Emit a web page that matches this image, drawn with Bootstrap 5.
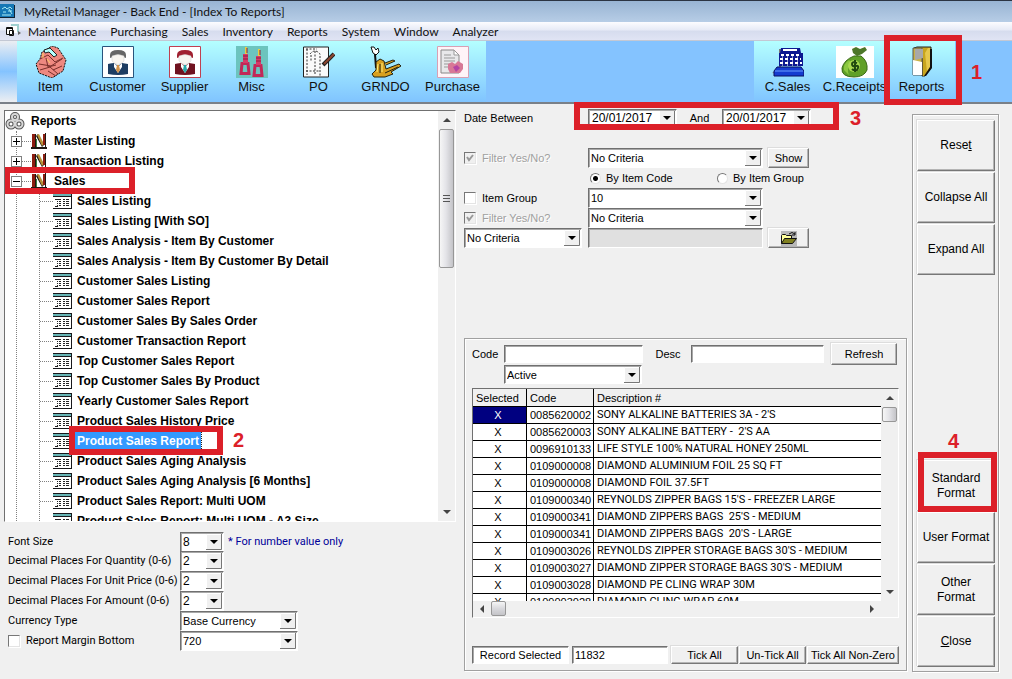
<!DOCTYPE html>
<html lang="en">
<head>
<meta charset="utf-8">
<meta name="viewport" content="width=device-width, initial-scale=1">
<title>MyRetail Manager - Back End - [Index To Reports]</title>
<link href="https://cdn.jsdelivr.net/npm/bootstrap@5.3.0/dist/css/bootstrap.min.css" rel="stylesheet">
<style>
:root{--face:#f0f0f0;--mark:#dc2029}
body{height:100vh;min-height:640px;background:var(--face);color:#000;font:11px/14px "Liberation Sans",Arial,sans-serif;overflow-x:hidden}
.titlebar{height:22px;border-top:1px solid #2b3442;background:linear-gradient(#98b4d3,#b7cde6);white-space:nowrap}
.titlebar h1,.menubar a{font:12px/19px Lato,"Open Sans",sans-serif;color:#111}
.menubar{height:19px;background:linear-gradient(#fcfcff,#e6eaf6 45%,#d6dcee 50%,#e0e4f4);border-bottom:1px solid #c3c8d4}
.menubar a{text-decoration:none}
.menus{gap:14px;margin-left:6px}
.toolstrip{height:63px;background:#84c3ff;border-bottom:2px solid #7a8088}
.grip{width:17px;background:linear-gradient(#eceef2,#84c3ff 50%,#eceef2)}
.tools{background:linear-gradient(#b4ffff,#80c4ff)}
.tools.last{margin-right:57px}
.tool{display:flex;flex-direction:column;align-items:center;width:67px;height:61px;padding:5px 0 0;border:0;background:none;font-size:13px;line-height:18px;color:#111;white-space:nowrap}
.tool svg{width:32px;height:32px;flex:none}
.ring{position:absolute;border:6px solid var(--mark);pointer-events:none;z-index:2}
.step{position:absolute;color:var(--mark);font-size:20px;line-height:20px;font-weight:700;z-index:2}
.ring-tool{inset:-6px -7px -3px -4px}
.ring-date{inset:-7px -28px -3px -14px}
.ring-pick{inset:-6px -22px -5px -6px}
.ring-node{inset:-4px -50px -3px -50px}
.ring-btn{inset:-7px -2px -1px 1px}
.work{display:grid;grid-template-columns:minmax(0,452fr) minmax(0,451fr) 92px;padding:4px 13px 8px 4px;min-height:0}
.left{margin-top:2px;min-height:0}
.mid{margin-left:8px;min-height:0}
.right{margin:6px 0 -1px 5px;border:1px solid #a0a0a0;box-shadow:inset 1px 1px #fff,1px 1px #fff;padding:4px 3px 4px 4px}
.well{border:1px solid #707070;border-right-color:#fff;border-bottom-color:#fff;background:#fff}
.tree{font-weight:700;font-size:12px;line-height:20px;min-height:0;flex:1 1 0}
.tree ul{list-style:none;margin:0;padding:0}
.tree-view{overflow:hidden;white-space:nowrap}
.tree li>div,.tree-root{height:20px;display:flex;align-items:center;width:max-content}
.tree-root{gap:6px}
.tree .branch{margin-left:11px;position:relative;z-index:0}
.branch::before{content:"";position:absolute;z-index:-1;left:0;top:0;bottom:0;border-left:1px dotted #808080}
.tree .kids{margin-left:23px;position:relative}
.kids::before{content:"";position:absolute;left:0;top:0;bottom:0;border-left:1px dotted #808080}
.plus{width:11px;height:11px;margin-left:-5px;background:#fff;border:1px solid #808080;flex:none;display:flex;position:relative}
.plus::before{content:"";position:absolute;left:1px;top:4px;width:7px;height:1px;background:#000}
.plus.closed::after{content:"";position:absolute;left:4px;top:1px;width:1px;height:7px;background:#000}
.dash{width:9px;border-top:1px dotted #808080;flex:none}
.kids .dash{width:13px;margin-left:1px}
.books{width:16px;height:16px;margin-right:7px}
.sheet{width:19px;height:17px;margin-right:5px}
.picked{position:relative;background:#3399ff;color:#fff;height:18px;line-height:18px;outline:1px dotted #222;padding:0 2px;margin-left:-2px}
.bar{background:#f0f0f0;width:17px;flex:none;display:flex;flex-direction:column;align-items:center}
.bar.flat{width:auto;height:16px;flex-direction:row}
.arr{flex:none;width:0;height:0;border:4px solid transparent;margin:5px 0}
.arr.up{border-bottom-color:#444;border-top:0;margin:7px 0}
.arr.dn{border-top-color:#444;border-bottom:0;margin:7px 0}
.arr.lt{border-right-color:#444;border-left:0;margin:0 7px}
.arr.rt{border-left-color:#444;border-right:0;margin:0 7px}
.thumb{border:1px solid #979797;border-radius:2px;background:linear-gradient(90deg,#f6f6f6,#e4e4e8 45%,#c4c4c8);width:15px;flex:none;display:flex;align-items:center;justify-content:center}
.thumb svg{width:7px;height:9px}
.flat .thumb{background:linear-gradient(#f6f6f6,#d9d9dd 50%,#c4c4c8);height:15px}
.opts{display:grid;grid-template-columns:172px 118px auto;grid-auto-rows:20px;grid-template-rows:18px;align-items:center;padding:0 0 20px 4px;margin-top:11px;white-space:nowrap;font-family:Roboto,"Liberation Sans",sans-serif}
.hint{margin-left:-70px;color:#000099}
.fld,.drop{border:1px solid #707070;border-right-color:#fff;border-bottom-color:#fff;border-radius:0;background-color:#fff;color:#000;box-shadow:inset 1px 1px #a8a8a8;height:20px;padding:0 2px;font:11px/16px "Liberation Sans",Arial,sans-serif;min-width:0;width:100%}
.drop{appearance:none;background-image:url("data:image/svg+xml,%3Csvg xmlns='http://www.w3.org/2000/svg' width='16' height='16'%3E%3Cpath fill='%23f0f0f0' d='M0 0h16v16H0z'/%3E%3Cpath fill='none' stroke='%23fff' d='M.5 15V.5H15'/%3E%3Cpath fill='none' stroke='%23777' d='M0 15.500h15.500V0'/%3E%3Cpath d='M4 6h8L8 10z'/%3E%3C/svg%3E");background-repeat:no-repeat;background-position:right 1px center}
.drop.tiny{width:44px;font-size:12px}
.crit{display:grid;grid-template-columns:124px minmax(0,175px) 46px;grid-auto-rows:20px;align-items:center;white-space:nowrap}
.crit .push{margin-left:5px}
.tick{appearance:none;width:12px;height:12px;margin:0 6px 0 0;flex:none;background:#fff;border:1px solid #777;border-right-color:#e4e4e4;border-bottom-color:#e4e4e4;box-shadow:1px 1px #fff}
.tick:disabled{background:#f0f0f0 url("data:image/svg+xml,%3Csvg xmlns='http://www.w3.org/2000/svg' viewBox='0 0 10 10'%3E%3Cpath fill='none' stroke='%23999' stroke-width='2' d='M2 4l2 3 4-5'/%3E%3C/svg%3E")}
.dot{appearance:none;width:11px;height:11px;margin:0 5px 0 2px;flex:none;border-radius:50%;background:#fff;border:1px solid #777;border-right-color:#e4e4e4;border-bottom-color:#e4e4e4}
.dot:checked{background:radial-gradient(#000 0 2px,#fff 3px)}
.by-code{flex:0 0 127px}
.off{color:#a0a0a0;text-shadow:1px 1px #fff}
.push-btn{background:#f0f0f0;border:1px solid #fff;border-right-color:#777;border-bottom-color:#777;box-shadow:inset -1px -1px #b4b4b4,-1px -1px #ddd;border-radius:0;padding:0;color:#000;font-size:11px;line-height:14px;height:20px;white-space:nowrap}
.cmd{height:51px;margin:1px 0 0;font-size:12px;line-height:15px;width:100%}
.drop.date{width:89px;height:18px;font-size:12px;padding-left:3px}
.finder{border:1px solid #a0a0a0;box-shadow:inset 1px 1px #fff,1px 1px #fff;margin-top:90px;padding:4px 7px 6px;min-height:0}
.items{table-layout:fixed;width:100%;border-collapse:separate;border-spacing:0;font-size:11px;line-height:16px;white-space:nowrap}
.items th,.items td{padding:0 0 0 3px;height:17px;border-bottom:1px solid #000;border-right:1px solid #000;overflow:hidden;font-weight:400}
.items th{background:#f0f0f0;height:18px}
.items tr>:last-child{border-right:0;white-space:pre}
.items td:last-child{font-family:Roboto,"Liberation Sans",sans-serif}
.items td:first-child{text-align:center;padding:0 3px 0 0}
.items .sel{background:#000080;color:#fff}
</style>
</head>
<body class="d-flex flex-column">
<svg class="d-none">
  <symbol id="books" viewBox="0 0 16 16"><path fill="#8c1c10" d="M1 1h3v13H1z"/><path fill="#1d1712" d="M4 1h1v13H4zM0 14h16v2H0zM5 3l2-2 6 11-2 2z"/><path fill="#b79035" d="M6 2l2-1 5 10-2 2z"/><path fill="#3f7f40" d="M5 6h1v8H5z"/><path fill="#8c1c10" d="M12 1h2v11h-2z"/><path fill="#1d1712" d="M14 0h1v14h-1z"/></symbol>
  <symbol id="sheet" viewBox="0 0 19 17"><path fill="#fff" d="M0 0h19v17H0z"/><path fill="#18181c" d="M0 0h19v1H0zM0 3h18v1H0zM0 15h19v1H0zM18 1h1v15h-1z"/><path fill="#66b5b5" d="M0 1h18v2H0z"/><path stroke="#222" d="M2 6.500h6M4 8.500h1m1 0h2M4 10.500h1m1 0h2M4 12.500h1m1 0h2M2 13.500h3M10 6.500h2m1 0h3M10 8.500h2m1 0h3M10 10.500h2m1 0h3M10 12.500h2m1 0h3" fill="none"/></symbol>
</svg>

<header class="titlebar d-flex align-items-center flex-shrink-0">
  <svg width="16" height="15" viewBox="0 0 16 15" class="me-2"><path fill="#1577b5" d="M0 0h14v13H0z"/><path fill="#123" d="M14 1h1v13H0v-1h14z"/><path fill="none" stroke="#a8ecf5" d="M2 5l3-2 2 2 3-2 2 2M3 8h3m2-1h4M2 11h9M9 5l3 5"/></svg>
  <h1 class="m-0">MyRetail Manager - Back End - [Index To Reports]</h1>
</header>
<nav class="menubar d-flex flex-shrink-0" aria-label="Main menu">
  <svg width="18" height="16" viewBox="0 0 18 16" class="flex-shrink-0 ms-1"><path fill="#a0d0d0" d="M7 2h8v8H7z"/><path fill="#fff" d="M5 4h8v7H5z"/><path fill="#fff" stroke="#111" d="M2.500 5.500h6v7h-6zM5.500 8.500h4v5h-4zM2 6.500h7"/><path fill="#666" d="M14 9l3 2-3 2z"/></svg>
  <div class="d-flex menus">
    <a href="#">Maintenance</a><a href="#">Purchasing</a><a href="#">Sales</a><a href="#">Inventory</a><a href="#">Reports</a><a href="#">System</a><a href="#">Window</a><a href="#">Analyzer</a>
  </div>
</nav>

<div class="toolstrip d-flex flex-shrink-0" role="toolbar" aria-label="Shortcuts">
  <div class="grip"></div>
  <div class="tools d-flex">
    <button class="tool" type="button"><svg viewBox="0 0 32 32"><path fill="#ee8880" stroke="#111" stroke-dasharray="2 1" d="M9 5l8-5 6 2 8 12-3 11-11 7-13-5-3-9 4-5 2-7z"/><path fill="#b4ffff" stroke="#222" d="M9 4l6-2 7 7-3 2-5-5-4 1z"/><path fill="none" stroke="#7a2f2b" d="M5 13l8-4 7 7 8-4M4 18l12 2 11-7M11 12l2 9 8-2M5 24l10-3 8 7M18 24l9-4M13 25l8 5"/><path stroke="#ffd060" d="M8 7v5m4 1l3 4"/></svg>Item</button>
    <button class="tool" type="button"><svg viewBox="0 0 32 32"><path fill="#fff" stroke="#29547c" d="M.5.500h31v31H.5z"/><path fill="#666" d="M8 9q0-5 8-5t8 5v3q-8-4-16 0z"/><path fill="#f8f5f0" stroke="#ccc" stroke-width=".5" d="M10 10q6-3 12 0v5q-6 7-12 0z"/><path fill="#1d3d62" d="M6 28V18q5-1 6-1l4 3 4-3 6 1v10q-10 2-20 0z"/><path fill="#fff" d="M12 17l4 4 4-4v4l-4 6-4-6z"/><path fill="#d19248" d="M15 19h2l1 5-2 3-2-3z"/></svg>Customer</button>
    <button class="tool" type="button"><svg viewBox="0 0 32 32"><path fill="#fff" stroke="#c04050" d="M.5.500h31v31H.5z"/><path fill="#a02030" d="M8 9q0-5 8-5t8 5v3q-8-4-16 0z"/><path fill="#f8f5f0" stroke="#ccc" stroke-width=".5" d="M10 10q6-3 12 0v5q-6 7-12 0z"/><path fill="#701220" d="M6 28V18q5-1 6-1l4 3 4-3 6 1v10q-10 2-20 0z"/><path fill="#fff" d="M12 17l4 4 4-4v4l-4 6-4-6z"/><path fill="#2aa8a8" d="M15 19h2l1 5-2 3-2-3z"/></svg>Supplier</button>
    <button class="tool" type="button"><svg viewBox="0 0 32 32"><path fill="#6cc4be" d="M0 0h32v32H0z"/><g fill="none" stroke="#c22858" stroke-width="3"><path d="M6 17.500h6l1 10H5zM19 19.500h6l1 10h-8z"/></g><path fill="#d83a68" d="M7 8h5v9H7zM20 10h5v9h-5z"/><path fill="#e8d040" d="M9 1h2v7H9zM22 3h2v7h-2z"/><path stroke="#8a2040" d="M7 10h5M7 13h5M20 12h5M20 15h5M11 2v5M24 4v5"/></svg>Misc</button>
    <button class="tool" type="button"><svg viewBox="0 0 32 32"><path fill="#fafafa" stroke="#222" d="M.5 1h25v30H.5z"/><path fill="none" stroke="#333" stroke-dasharray="2 1.500" d="M3 3h11M4 3v26M7 8q5-6 10 0v22M12 5v24M3 25h13M8 9v6"/><path stroke="#222" stroke-width="4" d="M20 19l11-11"/><path stroke="#8e4630" stroke-width="2" d="M21 18l10-10"/></svg>PO</button>
    <button class="tool" type="button"><svg viewBox="0 0 32 32"><path fill="#fff" stroke="#111" d="M1 1h3l2 3 2-2 1 4-3 3-3-2z"/><path stroke="#111" stroke-width="2" d="M5 8l1 14"/><path fill="#d8a020" stroke="#221" d="M6 16l4-3 4 2 2 8 13-5 2 2-10 6 2 2-8 3H4l-2-3 4-4zM16 19l9-4-2-1-8 3"/><path stroke="#fff080" d="M8 18l-1 8M12 17v9"/><path stroke="#221" d="M15 27l13-6M10 18v9"/></svg>GRNDO</button>
    <button class="tool" type="button"><svg viewBox="0 0 32 32"><path fill="#fff4f8" stroke="#d8a0b4" d="M.5.500h31v31H.5z"/><path fill="#e8e8ea" stroke="#888" d="M4 4h13l5 5v18H4z"/><path fill="#fff" stroke="#999" d="M17 4v5h5z"/><path stroke="#999" d="M7 9h7M7 12h11M7 15h11M7 18h6M7 21h4"/><path fill="#d87896" d="M11 18l4-2 3 2 3-3 5 3v5l-3 4H13l-2-4z"/><path fill="#b444a4" d="M16 21l4-2 3 3-4 4z"/></svg>Purchase</button>
  </div>
  <div class="tools last d-flex ms-auto">
    <button class="tool" type="button"><svg viewBox="0 0 32 32"><path fill="#777" d="M0 27l7-4V3h2v25z"/><path fill="#0c1890" d="M9 2h19l1 5h2v13H7V7h1z"/><path fill="#fff" d="M11 3h14v2H11z"/><path stroke="#fff" stroke-width="2" stroke-dasharray="3 2" d="M9 9h20M8 13h21M8 17h22"/><path stroke="#fff" stroke-dasharray="1 4" d="M10 11h18M10 15h18M10 19h18"/><path fill="#153bd0" stroke="#091060" d="M5 21h24l3 4v5H2v-5z"/><path stroke="#6ca0ff" d="M3 25h28"/></svg>C.Sales</button>
    <button class="tool" type="button"><svg viewBox="0 0 38 32" style="width:38px"><path fill="#fff" d="M0 0h38v32H0z"/><path fill="#4c7628" d="M16 3l4-2 4 2 5-2 2 3-5 4-5 2-4-3z"/><path fill="#60a028" stroke="#3b6a18" d="M18 10h7q7 5 6 14-3 7-13 7-13 0-12-9 2-8 12-12z"/><path fill="#8cc840" d="M13 14q-6 4-5 10l5 5q-3-7 2-13z"/><circle cx="18" cy="20" r="6" fill="#a8d850"/><path fill="none" stroke="#204810" stroke-width="2" d="M21 17q-5-2-5 1t4 2 1 4q-3 1-5-1M19 14v12"/></svg>C.Receipts</button>
    <div class="position-relative">
      <button class="tool" type="button"><svg viewBox="0 0 32 32"><path fill="#c8a51e" stroke="#222" d="M8 2l3-1h14v21l-6 8h-3V7z"/><path fill="#c9b24a" stroke="#555" d="M7 2h9v27H7z"/><path fill="#a8a8a8" d="M9 3h8v9l-8 2z"/><path fill="#fff" d="M7 14l9 2v13H7z"/><path fill="#c8a51e" d="M17 3h8v19l-6 8h-2z"/><path fill="#e6c84c" d="M19 7l3-5h2v19l-3 5z"/><path fill="#111" d="M24 3h2v19l-6 8h-2l6-9z"/></svg>Reports</button>
      <span class="ring ring-tool"></span><span class="step" style="left:83px;top:21px">1</span>
    </div>
  </div>
</div>

<main class="work flex-grow-1">
  <section class="left d-flex flex-column">
    <div class="well tree d-flex">
      <div class="tree-view flex-grow-1">
        <div class="tree-root"><svg width="20" height="18" viewBox="0 0 20 18"><g fill="none" stroke="#555" stroke-width="4"><circle cx="10" cy="5" r="3"/><circle cx="6" cy="12" r="3.500"/><circle cx="14" cy="12" r="3.500"/></g><g fill="none" stroke="#d8d8d8" stroke-width="2"><circle cx="10" cy="5" r="3"/><circle cx="6" cy="12" r="3.500"/><circle cx="14" cy="12" r="3.500"/></g></svg><span>Reports</span></div>
        <ul class="branch">
          <li><div><span class="plus closed"></span><span class="dash"></span><svg class="books"><use href="#books"/></svg>Master Listing</div></li>
          <li><div><span class="plus closed"></span><span class="dash"></span><svg class="books"><use href="#books"/></svg>Transaction Listing</div></li>
          <li><div><span class="plus"></span><span class="dash"></span><svg class="books"><use href="#books"/></svg><span class="position-relative">Sales<span class="ring ring-node"></span></span></div>
            <ul class="kids">
              <li><div><span class="dash"></span><svg class="sheet"><use href="#sheet"/></svg>Sales Listing</div></li>
              <li><div><span class="dash"></span><svg class="sheet"><use href="#sheet"/></svg>Sales Listing [With SO]</div></li>
              <li><div><span class="dash"></span><svg class="sheet"><use href="#sheet"/></svg>Sales Analysis - Item By Customer</div></li>
              <li><div><span class="dash"></span><svg class="sheet"><use href="#sheet"/></svg>Sales Analysis - Item By Customer By Detail</div></li>
              <li><div><span class="dash"></span><svg class="sheet"><use href="#sheet"/></svg>Customer Sales Listing</div></li>
              <li><div><span class="dash"></span><svg class="sheet"><use href="#sheet"/></svg>Customer Sales Report</div></li>
              <li><div><span class="dash"></span><svg class="sheet"><use href="#sheet"/></svg>Customer Sales By Sales Order</div></li>
              <li><div><span class="dash"></span><svg class="sheet"><use href="#sheet"/></svg>Customer Transaction Report</div></li>
              <li><div><span class="dash"></span><svg class="sheet"><use href="#sheet"/></svg>Top Customer Sales Report</div></li>
              <li><div><span class="dash"></span><svg class="sheet"><use href="#sheet"/></svg>Top Customer Sales By Product</div></li>
              <li><div><span class="dash"></span><svg class="sheet"><use href="#sheet"/></svg>Yearly Customer Sales Report</div></li>
              <li><div><span class="dash"></span><svg class="sheet"><use href="#sheet"/></svg>Product Sales History Price</div></li>
              <li><div><span class="dash"></span><svg class="sheet"><use href="#sheet"/></svg><span class="picked">Product Sales Report<span class="ring ring-pick"></span><span class="step" style="left:158px;top:-2px">2</span></span></div></li>
              <li><div><span class="dash"></span><svg class="sheet"><use href="#sheet"/></svg>Product Sales Aging Analysis</div></li>
              <li><div><span class="dash"></span><svg class="sheet"><use href="#sheet"/></svg>Product Sales Aging Analysis [6 Months]</div></li>
              <li><div><span class="dash"></span><svg class="sheet"><use href="#sheet"/></svg>Product Sales Report: Multi UOM</div></li>
              <li><div><span class="dash"></span><svg class="sheet"><use href="#sheet"/></svg>Product Sales Report: Multi UOM - A3 Size</div></li>
            </ul>
          </li>
        </ul>
      </div>
      <div class="bar" aria-hidden="true"><i class="arr up"></i><span class="thumb" style="height:34%"><svg viewBox="0 0 7 9"><path stroke="#555" d="M0 1.500h7M0 4.500h7M0 7.500h7"/></svg></span><i class="arr dn mt-auto"></i></div>
    </div>
    <form class="opts">
      <label for="o1">Font Size</label><select id="o1" class="drop tiny"><option>8</option></select><span class="hint">* For number value only</span>
      <label for="o2">Decimal Places For Quantity (0-6)</label><select id="o2" class="drop tiny"><option>2</option></select><i></i>
      <label for="o3">Decimal Places For Unit Price (0-6)</label><select id="o3" class="drop tiny"><option>2</option></select><i></i>
      <label for="o4">Decimal Places For Amount (0-6)</label><select id="o4" class="drop tiny"><option>2</option></select><i></i>
      <label for="o5">Currency Type</label><select id="o5" class="drop"><option>Base Currency</option></select><i></i>
      <label class="d-flex align-items-center"><input type="checkbox" class="tick">Report Margin Bottom</label><select class="drop" aria-label="Report margin bottom"><option>720</option></select><i></i>
    </form>
  </section>

  <section class="mid d-flex flex-column">
    <div class="crit">
      <span>Date Between</span>
      <div class="d-flex align-items-center position-relative" style="width:223px"><select class="drop date" aria-label="From date"><option>20/01/2017</option></select><span class="flex-fill text-center">And</span><select class="drop date" aria-label="To date"><option>20/01/2017</option></select><span class="ring ring-date"></span><span class="step" style="left:262px;top:-1px">3</span></div><i></i>
      <i></i><i></i><i></i>
      <label class="d-flex align-items-center off"><input type="checkbox" class="tick" checked disabled>Filter Yes/No?</label><select class="drop" aria-label="Item criteria"><option>No Criteria</option></select><button class="push-btn push" type="button">Show</button>
      <i></i><div class="d-flex align-items-center"><label class="d-flex align-items-center by-code"><input type="radio" name="by" class="dot" checked>By Item Code</label><label class="d-flex align-items-center"><input type="radio" name="by" class="dot">By Item Group</label></div><i></i>
      <label class="d-flex align-items-center"><input type="checkbox" class="tick">Item Group</label><select class="drop" aria-label="Item group"><option>10</option></select><i></i>
      <label class="d-flex align-items-center off"><input type="checkbox" class="tick" checked disabled>Filter Yes/No?</label><select class="drop" aria-label="Group criteria"><option>No Criteria</option></select><i></i>
      <div style="padding-right:6px"><select class="drop" aria-label="Extra criteria"><option>No Criteria</option></select></div><input class="fld" style="background-color:#e0e0e0" aria-label="Criteria value" disabled><button class="push-btn push" type="button" aria-label="Open"><svg width="16" height="15" viewBox="0 0 16 15"><path fill="#b8b8b8" d="M0 0h16v15H0z"/><path fill="#ffff9c" stroke="#111" d="M.5 12.500v-8l1-1h3l1 1h5v3"/><path fill="#808020" stroke="#111" d="M.5 12.500l3-5h12l-4 5z"/><path fill="none" stroke="#111" d="M8 3q3-3 6 0m0-2v3h-3"/></svg></button>
    </div>

    <div class="finder flex-grow-1 d-flex flex-column">
      <div class="d-flex align-items-center">
        <label for="code" style="width:32px">Code</label><input id="code" class="fld flex-fill" style="width:139px;height:18px">
        <label for="desc" style="width:49px;padding-left:13px">Desc</label><input id="desc" class="fld flex-fill" style="width:133px;height:18px">
        <button class="push-btn flex-shrink-0" type="button" style="width:66px;height:22px;margin:0 2px 0 7px">Refresh</button>
      </div>
      <select class="drop" aria-label="Status" style="width:138px;margin-left:32px"><option>Active</option></select>
      <div class="well flex-fill d-flex flex-column overflow-hidden" style="margin-top:4px;min-height:0">
        <div class="d-flex flex-fill overflow-hidden" style="min-height:0">
          <div class="flex-fill overflow-hidden">
            <table class="items">
              <colgroup><col style="width:54px"><col style="width:67px"><col></colgroup>
              <thead><tr><th>Selected</th><th>Code</th><th>Description #</th></tr></thead>
              <tbody>
                <tr><td class="sel">X</td><td>0085620002</td><td>SONY ALKALINE BATTERIES 3A - 2'S</td></tr>
                <tr><td>X</td><td>0085620003</td><td>SONY ALKALINE BATTERY -  2'S AA</td></tr>
                <tr><td>X</td><td>0096910133</td><td>LIFE STYLE 100% NATURAL HONEY 250ML</td></tr>
                <tr><td>X</td><td>0109000008</td><td>DIAMOND ALUMINIUM FOIL 25 SQ FT</td></tr>
                <tr><td>X</td><td>0109000008</td><td>DIAMOND FOIL 37.5FT</td></tr>
                <tr><td>X</td><td>0109000340</td><td>REYNOLDS ZIPPER BAGS 15'S - FREEZER LARGE</td></tr>
                <tr><td>X</td><td>0109000341</td><td>DIAMOND ZIPPERS BAGS  25'S - MEDIUM</td></tr>
                <tr><td>X</td><td>0109000341</td><td>DIAMOND ZIPPERS BAGS  20'S - LARGE</td></tr>
                <tr><td>X</td><td>0109003026</td><td>REYNOLDS ZIPPER STORAGE BAGS 30'S - MEDIUM</td></tr>
                <tr><td>X</td><td>0109003027</td><td>DIAMOND ZIPPER STORAGE BAGS 30'S - MEDIUM</td></tr>
                <tr><td>X</td><td>0109003028</td><td>DIAMOND PE CLING WRAP 30M</td></tr>
                <tr><td>X</td><td>0109003028</td><td>DIAMOND CLING WRAP 60M</td></tr>
              </tbody>
            </table>
          </div>
          <div class="bar" aria-hidden="true"><i class="arr up"></i><span class="thumb" style="height:15px"></span><i class="arr dn mt-auto"></i></div>
        </div>
        <div class="bar flat" aria-hidden="true" style="padding-right:17px"><i class="arr lt"></i><span class="thumb"></span><i class="arr rt ms-auto"></i></div>
      </div>
      <div class="d-flex" style="margin-top:28px">
        <span class="fld flex-shrink-0 text-center" style="width:97px;height:18px">Record Selected</span>
        <input class="fld flex-fill" aria-label="Record count" value="11832" style="width:97px;height:18px;margin:0 3px">
        <button class="push-btn flex-shrink-0" type="button" style="width:67px;height:18px">Tick All</button><button class="push-btn flex-shrink-0" type="button" style="width:67px;height:18px;margin:0 1px">Un-Tick All</button><button class="push-btn flex-shrink-0" type="button" style="width:92px;height:18px">Tick All Non-Zero</button>
      </div>
    </div>
  </section>

  <aside class="right d-flex flex-column">
    <button class="push-btn cmd" type="button">Rese<u>t</u></button>
    <button class="push-btn cmd" type="button">Collapse All</button>
    <button class="push-btn cmd" type="button">Expand All</button>
    <div class="position-relative mt-auto"><button class="push-btn cmd" type="button">Standard<br>Format</button><span class="ring ring-btn"></span><span class="step" style="left:31px;top:-28px">4</span></div>
    <button class="push-btn cmd" type="button">User Format</button>
    <button class="push-btn cmd" type="button">Other<br>Format</button>
    <button class="push-btn cmd" type="button"><u>C</u>lose</button>
  </aside>
</main>
<script src="https://cdn.jsdelivr.net/npm/bootstrap@5.3.0/dist/js/bootstrap.bundle.min.js"></script>
</body>
</html>
